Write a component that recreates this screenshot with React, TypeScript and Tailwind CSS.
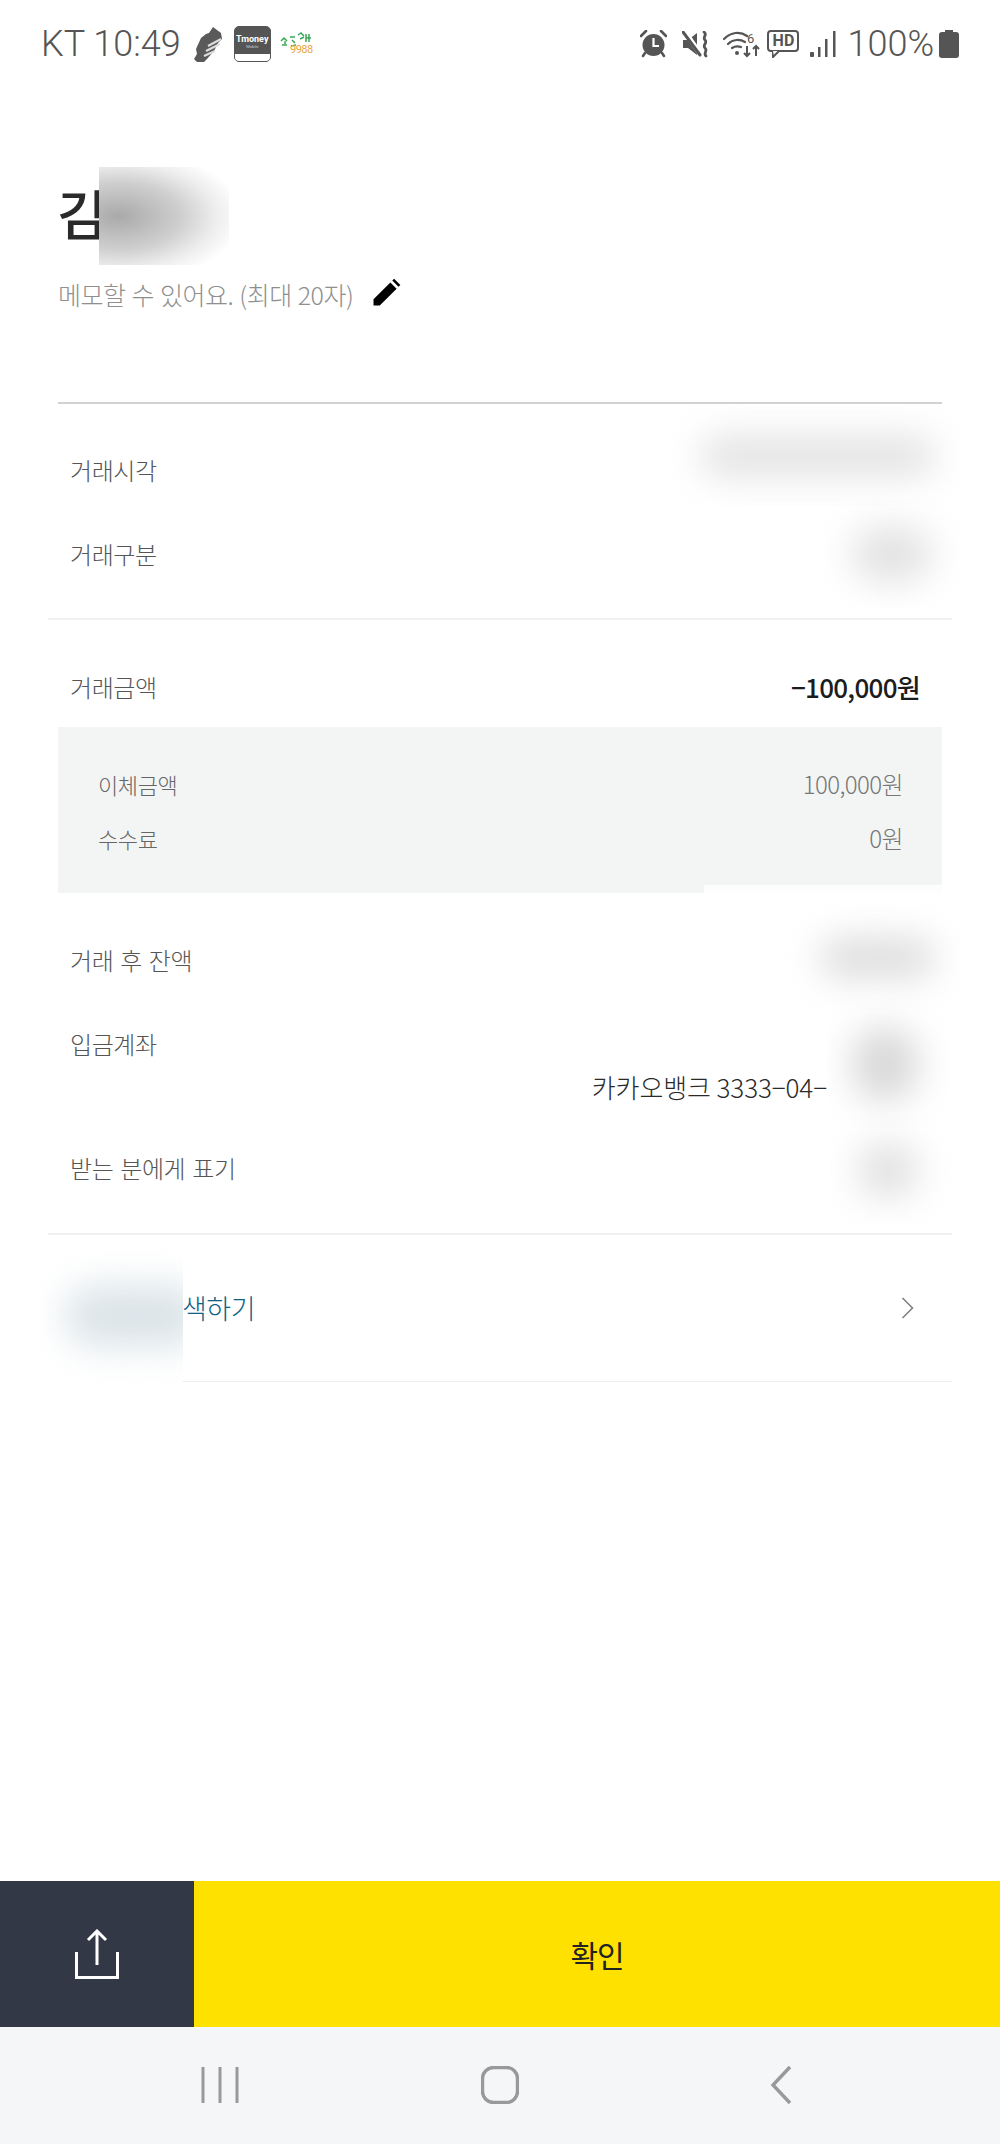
import React from "react";

function Smudge({ className, inner }: { className: string; inner: string }) {
  return (
    <div className={`absolute overflow-hidden ${className}`} aria-hidden="true">
      <div className={`absolute ${inner}`} />
    </div>
  );
}

function Row({ label, value, h = "h-[84px]", smudge }: { label: string; value?: React.ReactNode; h?: string; smudge?: React.ReactNode }) {
  return (
    <div className={`relative flex items-center justify-between pl-[70px] pr-[80px] ${h}`}>
      <span className="text-[24px] tracking-[-0.4px] [word-spacing:2px] font-light text-[#555]">{label}</span>
      {value}
      {smudge}
    </div>
  );
}

function SubRow({ label, value }: { label: string; value: string }) {
  return (
    <div className="flex h-[54px] items-center justify-between pl-[40px] pr-[39px]">
      <span className="text-[22px] tracking-[-0.4px] font-light text-[#666]">{label}</span>
      <span className="text-[24px] tracking-[-0.6px] font-light text-[#777]">{value}</span>
    </div>
  );
}

function StatusLeftIcons() {
  return (
    <div className="flex items-center">
      <svg width="30" height="36" viewBox="0 0 30 36" className="ml-[12px]">
        <path d="M20 1l8 6 1 6-4 4-4 8-7 8-3 3H4L1 33l3-5-1-5 5-11 5-4 3-1z" fill="#5a5a5a" />
        <path d="M13 25l14-7M11 30l11-5M15 20l13-7" stroke="#ddd" strokeWidth="2" />
      </svg>
      <div className="ml-[11px] flex h-[36px] w-[37px] flex-col items-center overflow-hidden rounded-[5px] border border-[#555] bg-[#555]">
        <span className="mt-[7px] text-[9px] leading-[10px] font-bold text-white font-['Roboto',sans-serif]">Tmoney</span>
        <span className="text-[4px] leading-[5px] text-[#ccc] font-['Roboto',sans-serif]">Mobile</span>
        <div className="mt-auto h-[7px] w-full bg-white" />
      </div>
      <div className="ml-[9px] flex h-[24px] w-[33px] flex-col items-end">
        <svg width="33" height="15" viewBox="0 0 33 15" className="-mb-[3px]">
          <path d="M1 9l3-3 3 3M2 13h5M5 9v3M10 5h5M12 8l3 3M11 14l5-1M18 3l3-2 3 3M20 7l4-2M26 2v8M29 2v8M26 6h5" stroke="#3aa655" strokeWidth="1.5" fill="none" />
        </svg>
        <span className="text-[11px] leading-[12px] tracking-[-0.5px] text-[#e9a63a] font-['Roboto',sans-serif]">9988</span>
      </div>
    </div>
  );
}

function StatusRightIcons() {
  return (
    <div className="flex items-center">
      <svg width="27" height="28" viewBox="0 0 27 28">
        <path d="M1 6l5-5M26 6l-5-5" stroke="#555" strokeWidth="2.6" strokeLinecap="round" />
        <circle cx="13.5" cy="15" r="11" fill="#555" />
        <path d="M13.5 8v8h5.5" stroke="#fff" strokeWidth="2.2" fill="none" />
        <path d="M5 23l-2 3M22 23l2 3" stroke="#555" strokeWidth="2.6" strokeLinecap="round" />
      </svg>
      <svg width="27" height="27" viewBox="0 0 27 27" className="ml-[15px]">
        <path d="M1 9h5l9-7v22l-9-7H1z" fill="#555" />
        <path d="M3 1l16 23" stroke="#fff" strokeWidth="5" />
        <path d="M1 1l17 23" stroke="#555" strokeWidth="3" strokeLinecap="round" />
        <path d="M22 1c4 3-2 5 1 8s-3 5 0 8 -2 5 1 8" stroke="#555" strokeWidth="2.8" fill="none" strokeLinecap="round" />
      </svg>
      <svg width="37" height="28" viewBox="0 0 37 28" className="ml-[14px]">
        <path d="M1 9c7-7 16-8 23-3M5 14c5-5 12-5 17-2M9 18c3-2 6-2 9-1" stroke="#555" strokeWidth="2.2" fill="none" strokeLinecap="round" />
        <circle cx="14" cy="23" r="2" fill="#555" />
        <text x="24" y="13" fontSize="13" fill="#555" fontFamily="Roboto, sans-serif">6</text>
        <path d="M24 16v10M21 23l3 3 3-3M33 26V16M30 19l3-3 3 3" stroke="#555" strokeWidth="2" fill="none" />
      </svg>
      <div className="relative ml-[7px] flex h-[22px] w-[32px] -translate-y-[3px] items-center justify-center rounded-[4px] border-2 border-[#555]">
        <span className="text-[16px] leading-none font-bold text-[#555] font-['Roboto',sans-serif]">HD</span>
        <svg width="10" height="7" viewBox="0 0 10 7" className="absolute left-[3px] top-[19px]">
          <path d="M0 0l1 6 6-6" stroke="#555" strokeWidth="2" fill="#fff" />
        </svg>
      </div>
      <svg width="26" height="26" viewBox="0 0 26 26" className="ml-[11px]">
        <rect x="0" y="21" width="4" height="5" rx="1" fill="#555" />
        <rect x="8" y="16" width="2.5" height="10" fill="#555" />
        <rect x="15" y="8" width="2.5" height="18" fill="#555" />
        <rect x="23" y="0" width="2.5" height="26" fill="#555" />
      </svg>
      <span className="ml-[11px] text-[36px] leading-none font-light text-[#555] font-['Roboto',sans-serif]">100%</span>
      <svg width="20" height="28" viewBox="0 0 20 28" className="ml-[5px]">
        <path d="M6 0h8v2h3a3 3 0 0 1 3 3v20a3 3 0 0 1-3 3H3a3 3 0 0 1-3-3V5a3 3 0 0 1 3-3h3z" fill="#555" />
      </svg>
    </div>
  );
}

export default function App() {
  return (
    <div className="flex h-[2144px] w-[1000px] flex-col overflow-hidden bg-white font-['Noto_Sans_CJK_KR','Noto_Sans',sans-serif]">
      <div className="flex h-[88px] shrink-0 items-center justify-between pl-[41px] pr-[41px]">
        <div className="flex items-center">
          <span className="text-[36px] leading-none font-light text-[#555] font-['Roboto',sans-serif]">KT 10:49</span>
          <StatusLeftIcons />
        </div>
        <StatusRightIcons />
      </div>

      <main className="flex min-h-0 flex-1 flex-col">
        <div className="relative mt-[95px] pl-[57px]">
          <h1 className="h-[60px] text-[54px] leading-[60px] font-medium text-[#2a2a2a]">김</h1>
          <Smudge
            className="left-[99px] top-[-16px] h-[98px] w-[190px]"
            inner="left-[-60px] top-[-10px] h-[118px] w-[190px] bg-[radial-gradient(ellipse_at_42%_50%,#a9a9a9_0%,#cfcfcf_40%,#ededed_62%,#ffffff_80%)]"
          />
        </div>
        <div className="mt-[35px] flex h-[34px] items-center pl-[58px]">
          <span className="text-[25px] tracking-[-0.5px] [word-spacing:1px] font-light text-[#8f8f8f]">메모할 수 있어요. (최대 20자)</span>
          <svg width="30" height="30" viewBox="0 0 24 24" className="ml-[18px] -translate-y-[2px]">
            <path d="M2 22v-5L15.5 3.5l5 5L7 22zM17 2l1.5-1.5 5 5L22 7z" fill="#000" />
          </svg>
        </div>

        <div className="mx-[58px] mt-[90px] h-[2px] shrink-0 bg-[#d2d2d2]" />

        <div className="pt-[24px]">
          <Row
            label="거래시각"
            smudge={<Smudge className="right-[40px] top-[-22px] h-[100px] w-[290px]" inner="left-[30px] top-[30px] h-[40px] w-[235px] rounded-full bg-[#e2e2e2] blur-[18px]" />}
          />
          <Row
            label="거래구분"
            smudge={<Smudge className="right-[40px] top-[-12px] h-[108px] w-[150px]" inner="left-[42px] top-[26px] h-[56px] w-[80px] rounded-full bg-[#e2e2e2] blur-[18px]" />}
          />
        </div>
        <div className="mx-[48px] mt-[22px] h-[2px] shrink-0 bg-[#f1f1f1]" />

        <div className="pt-[26px]">
          <Row
            label="거래금액"
            h="h-[81px]"
            value={<span className="text-[26px] tracking-[-0.7px] font-medium text-[#1c1c1c]">−100,000원</span>}
          />
        </div>

        <div className="relative mx-[58px] h-[166px] shrink-0 bg-[#f3f5f5] pt-[30px]">
          <SubRow label="이체금액" value="100,000원" />
          <SubRow label="수수료" value="0원" />
          <div className="absolute bottom-0 right-0 h-[8px] w-[238px] bg-white/80" />
        </div>

        <div className="pt-[25px]">
          <Row
            label="거래 후 잔액"
            smudge={<Smudge className="right-[40px] top-[-16px] h-[108px] w-[180px]" inner="left-[40px] top-[36px] h-[40px] w-[115px] rounded-full bg-[#dcdcdc] blur-[18px]" />}
          />
        </div>

        <div className="relative pb-[19px] pt-[21px]">
          <div className="flex h-[42px] items-center pl-[70px]">
            <span className="text-[24px] tracking-[-0.4px] font-light text-[#555]">입금계좌</span>
          </div>
          <div className="flex h-[42px] items-center justify-end pr-[173px]">
            <span className="text-[26px] tracking-[-0.1px] font-light text-[#2a2a2a]">카카오뱅크 3333−04−</span>
          </div>
          <Smudge className="right-[50px] top-[-4px] h-[130px] w-[122px]" inner="left-[24px] top-[28px] h-[76px] w-[66px] rounded-full bg-[#d8d8d8] blur-[18px]" />
        </div>

        <Row
          label="받는 분에게 표기"
          smudge={<Smudge className="right-[48px] top-[-10px] h-[108px] w-[122px]" inner="left-[28px] top-[26px] h-[56px] w-[60px] rounded-full bg-[#e0e0e0] blur-[18px]" />}
        />
        <div className="mx-[48px] mt-[23px] h-[2px] shrink-0 bg-[#f0f0f0]" />

        <div className="relative flex h-[146px] shrink-0 items-center justify-between pl-[182px] pr-[85px]">
          <span className="text-[27px] tracking-[-0.5px] font-light text-[#0d6185]">색하기</span>
          <svg width="14" height="24" viewBox="0 0 14 24">
            <path d="M1.5 2l10 10-10 10" stroke="#808080" strokeWidth="1.6" fill="none" />
          </svg>
          <Smudge className="left-[40px] top-[14px] h-[135px] w-[143px]" inner="left-[24px] top-[36px] h-[62px] w-[140px] rounded-full bg-[#dbe4e8] blur-[18px]" />
        </div>
        <div className="ml-[183px] mr-[48px] h-[1px] shrink-0 bg-[#eeeeee]" />
      </main>

      <div className="flex h-[146px] shrink-0">
        <button className="flex w-[194px] items-center justify-center bg-[#323845]">
          <svg width="44" height="50" viewBox="0 0 44 50">
            <path d="M22 36V2M13 11L22 2l9 9" stroke="#fff" strokeWidth="3" fill="none" />
            <path d="M1.5 23v25.5h41V23" stroke="#fff" strokeWidth="3" fill="none" />
          </svg>
        </button>
        <button className="flex flex-1 items-center justify-center bg-[#ffe100]">
          <span className="text-[30px] tracking-[-1px] font-normal text-[#222]">확인</span>
        </button>
      </div>

      <div className="relative flex h-[117px] shrink-0 items-center bg-[#f5f6f8] pb-[1px]">
        <svg width="38" height="38" viewBox="0 0 38 38" className="ml-[201px]">
          <path d="M2 1v36M19 1v36M36 1v36" stroke="#999" strokeWidth="3" />
        </svg>
        <svg width="38" height="38" viewBox="0 0 38 38" className="ml-[242px]">
          <rect x="1.5" y="1.5" width="35" height="35" rx="11" stroke="#999" strokeWidth="3.4" fill="none" />
        </svg>
        <svg width="22" height="40" viewBox="0 0 22 40" className="ml-[251px]">
          <path d="M20 2L3 20l17 18" stroke="#999" strokeWidth="3.4" fill="none" />
        </svg>
      </div>
    </div>
  );
}
